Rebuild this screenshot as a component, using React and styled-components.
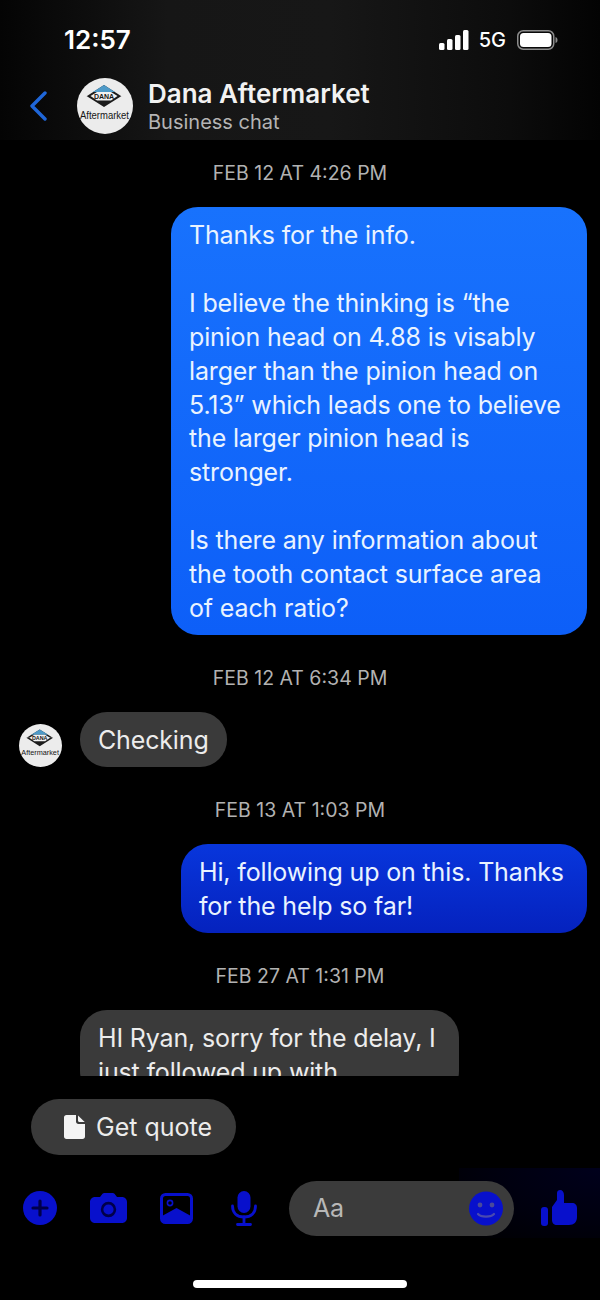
import React from 'react';
import styled, { createGlobalStyle } from 'styled-components';

//--------------------------------
//------------Styles--------------
//--------------------------------
const fontStack = `Inter, "Liberation Sans", sans-serif`;
const iconBlue = '#0810cc';

const GlobalStyle = createGlobalStyle`
	html, body {
		margin: 0;
		padding: 0;
		background: #000;
	}
	* {
		box-sizing: border-box;
	}
`;

const Phone = styled.div`
	width: 600px;
	height: 1300px;
	background: #000;
	display: flex;
	flex-direction: column;
	overflow: hidden;
	font-family: ${fontStack};
	color: #fff;
`;

const TopBar = styled.header`
	height: 140px;
	flex: none;
	background: linear-gradient(90deg, #040404 0%, #161616 28%, #171717 55%, #0c0c0c 85%, #030303 100%);
`;

const StatusBar = styled.div`
	height: 78px;
	padding: 0 42px 0 64px;
	display: flex;
	align-items: flex-start;
	justify-content: space-between;
`;

const Clock = styled.div`
	margin-top: 24px;
	font-size: 26px;
	line-height: 32px;
	font-weight: 600;
`;

const StatusIcons = styled.div`
	margin-top: 28px;
	display: flex;
	align-items: center;
	height: 24px;
`;

const Network = styled.span`
	font-size: 20px;
	font-weight: 500;
	margin: 0 11px 0 10px;
`;

const ChatHeader = styled.div`
	display: flex;
	align-items: center;
	height: 56px;
	padding-left: 29px;
`;

const BackSlot = styled.div`
	width: 48px;
	flex: none;
	display: flex;
	align-items: center;
`;

const LogoSvg = styled.svg`
	flex: none;
`;

const Titles = styled.div`
	margin-left: 15px;
	display: flex;
	flex-direction: column;
`;

const Name = styled.div`
	font-size: 26px;
	line-height: 32px;
	font-weight: 600;
	color: #f2f2f2;
`;

const Subtitle = styled.div`
	font-size: 20px;
	line-height: 24px;
	color: #b4b4b4;
`;

const Messages = styled.main`
	flex: none;
	height: 936px;
	overflow: hidden;
	padding: 22px 13px 0 0;
	display: flex;
	flex-direction: column;
`;

const Stamp = styled.div`
	text-align: center;
	padding-left: 13px;
	font-size: 19.5px;
	line-height: 22px;
	color: #b2b2b2;
	margin-bottom: 23px;
	white-space: pre;
`;

const Bubble = styled.div`
	width: ${props => props.$width}px;
	flex: none;
	padding: 12px 18px 9px;
	font-size: 25px;
	line-height: 33.9px;
	letter-spacing: -0.15px;
	white-space: pre;
	border-radius: 27px;
	margin-bottom: 32px;
	align-self: ${props => (props.$mine ? 'flex-end' : 'flex-start')};
	margin-left: ${props => (props.$mine ? '0' : '80px')};
	color: ${props => (props.$mine ? '#e9f3ff' : '#ececec')};
	background: ${props => props.$fill};
`;

const IncomingRow = styled.div`
	display: flex;
	align-items: flex-end;
	flex: none;
	padding-left: 19px;
	gap: 18px;
	margin-bottom: 32px;

	> ${Bubble} {
		margin: 0;
	}
`;

const QuickReplies = styled.div`
	flex: none;
	height: 79px;
	padding: 23px 0 0 31px;
`;

const QuickReply = styled.div`
	width: 205px;
	height: 56px;
	border-radius: 28px;
	background: #3a3a3a;
	display: flex;
	align-items: center;
	padding-left: 33px;
	gap: 11px;
	font-size: 25px;
	color: #ececec;
`;

const Composer = styled.div`
	flex: none;
	height: 80px;
	margin-top: 13px;
	display: flex;
	align-items: center;
	padding-left: 6px;
	background: radial-gradient(ellipse at 100% 0%, #00001c 0%, #00000e 55%, #000 100%) no-repeat 459px 0 / 141px 70px;
`;

const IconSlot = styled.div`
	width: 68px;
	flex: none;
	display: flex;
	align-items: center;
	justify-content: center;
`;

const InputPill = styled.div`
	margin-left: 11px;
	width: 225px;
	height: 55px;
	flex: none;
	border-radius: 28px;
	background: #3b3b3b;
	display: flex;
	align-items: center;
	justify-content: space-between;
	padding: 0 11px 0 24px;
	font-size: 25px;
	letter-spacing: -0.3px;
	color: #b8b8b8;
`;

const LikeSlot = styled.div`
	flex: 1;
	display: flex;
	justify-content: center;
	padding-left: 4px;
`;

const HomeArea = styled.div`
	flex: 1;
	display: flex;
	justify-content: center;
	padding-top: 32px;
`;

const HomeBar = styled.div`
	width: 214px;
	height: 8px;
	border-radius: 4px;
	background: #fff;
`;

//--------------------------------
//-------------Icons--------------
//--------------------------------
const Signal = () => (
	<svg width="30" height="20" viewBox="0 0 30 20">
		<rect x="0" y="13" width="5.5" height="7" rx="1.5" fill="#fff" />
		<rect x="8" y="9" width="5.5" height="11" rx="1.5" fill="#fff" />
		<rect x="16" y="5" width="5.5" height="15" rx="1.5" fill="#fff" />
		<rect x="24" y="0" width="5.5" height="20" rx="1.5" fill="#fff" />
	</svg>
);

const Battery = () => (
	<svg width="41" height="20" viewBox="0 0 41 20">
		<rect x="0.75" y="0.75" width="36" height="18.5" rx="5.5" fill="none" stroke="#8c8c8c" strokeWidth="1.5" />
		<rect x="3" y="3" width="31.5" height="14" rx="3.5" fill="#fff" />
		<path d="M38.5 7 C40 7.5 40.5 8.5 40.5 10 C40.5 11.5 40 12.5 38.5 13 Z" fill="#8c8c8c" />
	</svg>
);

const Back = () => (
	<svg width="18" height="30" viewBox="0 0 18 30">
		<path d="M16 2 L3 15 L16 28" fill="none" stroke="#1f66d8" strokeWidth="3.4" strokeLinecap="round" strokeLinejoin="round" />
	</svg>
);

const Logo = ({ size }) => (
	<LogoSvg width={size} height={size} viewBox="0 0 56 56">
		<circle cx="28" cy="28" r="28" fill="#ececec" />
		<path d="M27 7 L44 18 L10 18 Z" fill="#1c1c1c" />
		<path d="M27 7 L38 14 L16 14 Z" fill="#4e9ac8" />
		<path d="M13.5 18 L20 14 H34 L40.5 18 L34 22.5 H20 Z" fill="#f2f2f2" />
		<path d="M9.5 18 H13.5 L20 22.5 H34 L40.5 18 H44.5 L27 29 Z" fill="#1c1c1c" />
		<text x="27" y="20.6" textAnchor="middle" fontFamily="Liberation Sans" fontWeight="700" fontSize="7" fill="#161616">DANA</text>
		<text x="27.5" y="41" textAnchor="middle" fontFamily="Liberation Sans" fontSize="10" textLength="49" lengthAdjust="spacingAndGlyphs" fill="#161616">Aftermarket</text>
	</LogoSvg>
);

const FileIcon = () => (
	<svg width="21" height="24" viewBox="0 0 21 24">
		<path d="M2.5 0 H12 V6.5 C12 8 13 9 14.5 9 H21 V21.5 C21 23 20 24 18.5 24 H2.5 C1 24 0 23 0 21.5 V2.5 C0 1 1 0 2.5 0 Z" fill="#f4f4f4" />
		<path d="M14 0.4 L20.7 7 H15.5 C14.6 7 14 6.4 14 5.5 Z" fill="#f4f4f4" />
	</svg>
);

const PlusIcon = () => (
	<svg width="34" height="34" viewBox="0 0 34 34">
		<circle cx="17" cy="17" r="17" fill={iconBlue} />
		<path d="M17 10 V24 M10 17 H24" stroke="#00004a" strokeWidth="3.2" strokeLinecap="round" />
	</svg>
);

const CameraIcon = () => (
	<svg width="37" height="30" viewBox="0 0 37 30">
		<path d="M5 4 H10 L12.5 0.8 C13 0.3 13.6 0 14.4 0 H22.6 C23.4 0 24 0.3 24.5 0.8 L27 4 H32 C34.8 4 37 6.2 37 9 V25 C37 27.8 34.8 30 32 30 H5 C2.2 30 0 27.8 0 25 V9 C0 6.2 2.2 4 5 4 Z" fill={iconBlue} />
		<circle cx="18.5" cy="16.5" r="6.4" fill={iconBlue} stroke="#00004a" strokeWidth="2.6" />
	</svg>
);

const GalleryIcon = () => (
	<svg width="33" height="31" viewBox="0 0 33 31">
		<rect x="1.5" y="1.5" width="30" height="28" rx="4" fill="none" stroke={iconBlue} strokeWidth="3" />
		<path d="M2 27 V23 L16.5 15 L31 23 V27 C31 28.5 30 30 28 30 H5 C3 30 2 28.5 2 27 Z" fill={iconBlue} />
		<circle cx="10" cy="10" r="2.6" fill="none" stroke={iconBlue} strokeWidth="1.6" />
	</svg>
);

const MicIcon = () => (
	<svg width="26" height="35" viewBox="0 0 26 35">
		<rect x="6.5" y="0" width="13" height="22" rx="6.5" fill={iconBlue} />
		<path d="M1.5 15 C1.5 22 6 26 13 26 C20 26 24.5 22 24.5 15" fill="none" stroke={iconBlue} strokeWidth="2.8" strokeLinecap="round" />
		<path d="M13 26 V33 M6.5 33.5 H19.5" stroke={iconBlue} strokeWidth="2.8" strokeLinecap="round" />
	</svg>
);

const SmileIcon = () => (
	<svg width="34" height="35" viewBox="0 0 34 35">
		<circle cx="17" cy="17.5" r="17" fill={iconBlue} />
		<circle cx="11" cy="14" r="2.4" fill="#4a4a9a" />
		<circle cx="23" cy="14" r="2.4" fill="#4a4a9a" />
		<path d="M9 23 C12 26.5 22 26.5 25 23" fill="none" stroke="#4a4ab0" strokeWidth="2.2" strokeLinecap="round" />
	</svg>
);

const ThumbIcon = () => (
	<svg width="36" height="37" viewBox="0 0 36 37">
		<rect x="0" y="17" width="7" height="19" rx="3" fill={iconBlue} />
		<path d="M11 17 L16 10 V3 C16 1 17.5 0 19 0 C21.5 0 23 2 23 5 V13 H31 C34 13 36 15 36 18 V27 C36 32 33 35 28 35 H16 C13 35 11 33 11 30 Z" fill={iconBlue} />
	</svg>
);

//--------------------------------
//--------Functionality-----------
//--------------------------------
const App = () => {
	return (
		<Phone>
			<GlobalStyle />
			<TopBar>
				<StatusBar>
					<Clock>12:57</Clock>
					<StatusIcons>
						<Signal />
						<Network>5G</Network>
						<Battery />
					</StatusIcons>
				</StatusBar>
				<ChatHeader>
					<BackSlot>
						<Back />
					</BackSlot>
					<Logo size={56} />
					<Titles>
						<Name>Dana Aftermarket</Name>
						<Subtitle>Business chat</Subtitle>
					</Titles>
				</ChatHeader>
			</TopBar>

			<Messages>
				<Stamp>FEB 12 AT 4:26 PM</Stamp>
				<Bubble $mine $width={416} $fill="linear-gradient(180deg, #1872fd 0%, #0d5ff8 100%)">
					{`Thanks for the info.

I believe the thinking is “the
pinion head on 4.88 is visably
larger than the pinion head on
5.13” which leads one to believe
the larger pinion head is
stronger.

Is there any information about
the tooth contact surface area
of each ratio?`}
				</Bubble>

				<Stamp>FEB 12 AT 6:34 PM</Stamp>
				<IncomingRow>
					<Logo size={43} />
					<Bubble $width={147} $fill="#3a3a3a">Checking</Bubble>
				</IncomingRow>

				<Stamp>FEB 13 AT 1:03 PM</Stamp>
				<Bubble $mine $width={406} $fill="linear-gradient(180deg, #0836dc 0%, #0522be 100%)">
					{`Hi, following up on this. Thanks
for the help so far!`}
				</Bubble>

				<Stamp>FEB 27 AT 1:31 PM</Stamp>
				<Bubble $width={379} $fill="#3a3a3a">
					{`HI Ryan, sorry for the delay, I
just followed up with`}
				</Bubble>
			</Messages>

			<QuickReplies>
				<QuickReply>
					<FileIcon />
					Get quote
				</QuickReply>
			</QuickReplies>

			<Composer>
				<IconSlot><PlusIcon /></IconSlot>
				<IconSlot><CameraIcon /></IconSlot>
				<IconSlot><GalleryIcon /></IconSlot>
				<IconSlot><MicIcon /></IconSlot>
				<InputPill>
					Aa
					<SmileIcon />
				</InputPill>
				<LikeSlot><ThumbIcon /></LikeSlot>
			</Composer>

			<HomeArea>
				<HomeBar />
			</HomeArea>
		</Phone>
	);
};

export default App;
